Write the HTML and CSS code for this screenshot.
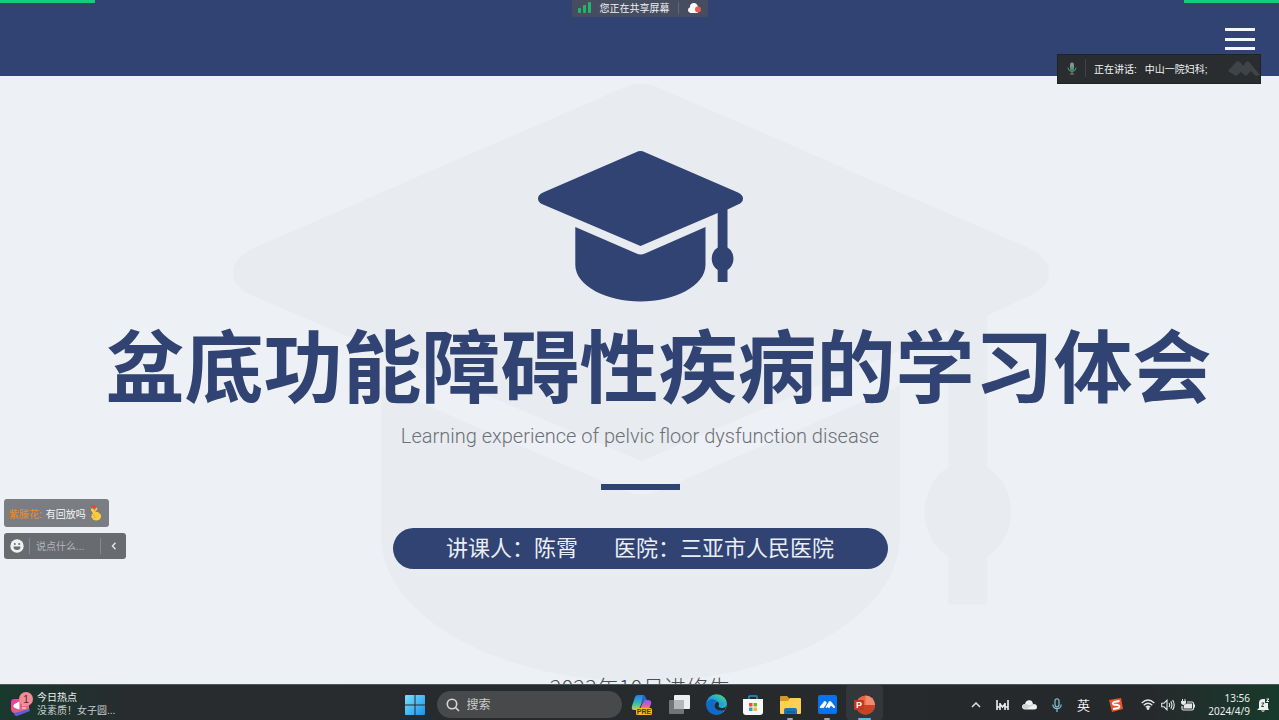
FILE: index.html
```html
<!DOCTYPE html>
<html lang="zh-CN">
<head>
<meta charset="utf-8">
<title>盆底功能障碍性疾病的学习体会</title>
<link rel="stylesheet" href="styles.css">
</head>
<body>
<svg class="defs" aria-hidden="true">
  <defs>
    <symbol id="cap" viewBox="0 0 205 151">
      <path d="M98 1.2Q102.500-1 107 1.200L200 41.500Q205 44 205 47.500Q205 51.500 200 53.500L189.500 58.500V96.500A12 13 0 0 1 189.500 119V131H179.700V119A12 13 0 0 1 179.700 96.500V62L102.500 95L5 53.500Q0 51.500 0 47.500Q0 44 5 41.500Z"/>
      <path d="M37.300 76L98.500 102.500Q102.500 104.300 107 102.500L167.500 76V114C167.500 135 136 150.500 102.500 150.500C69 150.500 37.300 135 37.300 114Z"/>
    </symbol>
    <linearGradient id="win" x1="0" y1="0" x2="1" y2="1"><stop offset="0" stop-color="#7ce0fb"/><stop offset="1" stop-color="#1793ee"/></linearGradient>
    <linearGradient id="edge" x1="0" y1="1" x2="1" y2="0"><stop offset="0" stop-color="#0f62c4"/><stop offset=".5" stop-color="#1ba4e0"/><stop offset="1" stop-color="#62e05a"/></linearGradient>
    <linearGradient id="cop1" x1="0" y1="0" x2="0" y2="1"><stop offset="0" stop-color="#2a7bea"/><stop offset=".55" stop-color="#2fbdb0"/><stop offset="1" stop-color="#c9d13c"/></linearGradient>
    <linearGradient id="cop2" x1="0" y1="0" x2="0" y2="1"><stop offset="0" stop-color="#8a5bf0"/><stop offset=".6" stop-color="#d95bc0"/><stop offset="1" stop-color="#f58a4a"/></linearGradient>
    <linearGradient id="news" x1="0" y1="0" x2="1" y2="1"><stop offset="0" stop-color="#e23ba5"/><stop offset="1" stop-color="#f2766a"/></linearGradient>
  </defs>
</svg>

<header class="topbar">
  <button class="menu" aria-label="菜单"><span></span><span></span><span></span></button>
</header>

<main class="slide">
  <svg class="watermark" aria-hidden="true"><use href="#cap"/></svg>
  <svg class="cap" aria-hidden="true"><use href="#cap"/></svg>
  <h1>盆底功能障碍性疾病的学习体会</h1>
  <p class="subtitle">Learning experience of pelvic floor dysfunction disease</p>
  <div class="rule"></div>
  <p class="speaker"><span>讲课人：陈霄</span><span>医院：三亚市人民医院</span></p>
  <p class="date">2023年10月进修生</p>
</main>

<div class="edge-mark left"></div>
<div class="edge-mark right"></div>

<div class="sharing">
  <svg width="14" height="11" viewBox="0 0 14 11" fill="#22b567"><rect x="0" y="6" width="3" height="5" rx="1"/><rect x="5" y="3" width="3" height="8" rx="1"/><rect x="10" y="0" width="3" height="11" rx="1"/></svg>
  <span class="sharing-text">您正在共享屏幕</span>
  <i class="divider"></i>
  <svg width="15" height="12" viewBox="0 0 15 12"><path d="M3.500 11A3 3 0 0 1 3 5.200A4 4 0 0 1 6.500 1A4.300 4.300 0 0 1 11 5.500V11Z" fill="#fff"/><circle cx="11" cy="7.500" r="3" fill="#e65a50"/></svg>
</div>

<div class="talking">
  <svg width="10" height="13" viewBox="0 0 10 13" fill="none"><rect x="3" y="0.500" width="4" height="8" rx="2" fill="#8b9291"/><path d="M3 5h4v1.500a2 2 0 0 1-4 0Z" fill="#28a866"/><path d="M1 5.500a4 4 0 0 0 8 0M5 9.500V12M3 12h4" stroke="#7d8483"/></svg>
  <i class="divider"></i>
  <span>正在讲话:</span><span>中山一院妇科;</span>
  <svg class="talking-logo" width="32" height="16" viewBox="0 0 32 16"><path d="M0 11L8 2Q10 0 13 3L15 6L18 2Q20 0 22 3L32 15L28 16L23 11L18 16L13 12L8 16Z" fill="#3f4449"/></svg>
</div>

<div class="chat">
  <div class="message"><span class="author">紫滕花:</span><span>有回放吗</span>
    <svg width="12" height="16" viewBox="0 0 12 16"><path d="M2 2.500Q0 .5 2 0Q3.500-.3 4 .8Q5-.3 6 .5Q7 1.500 4 4Z" fill="#e8473f"/><path d="M1 4Q2 2.500 3.500 4L6 7Q8 6.500 9 8Q11.500 9 11 12Q10 15.500 6 15.500Q3 15.500 2 13Q.5 11.500 2 10.500Q1 9 3 8.500L1.500 6Q.5 5 1 4Z" fill="#ffcb3d"/><path d="M4.500 5L6.500 2.500L7.500 3.500L6 6.500Z" fill="#ffcb3d"/><path d="M3 10.500L5 10M3.500 13L5.500 12" stroke="#dd9820" stroke-width=".7"/></svg>
  </div>
  <div class="compose">
    <button aria-label="表情"><svg width="14" height="14" viewBox="0 0 14 14"><circle cx="7" cy="7" r="6.700" fill="#f0f1f2"/><circle cx="4.800" cy="5" r="1" fill="#686b70"/><circle cx="9.200" cy="5" r="1" fill="#686b70"/><path d="M3.500 7.500h7a3.500 3.500 0 0 1-7 0Z" fill="#686b70"/></svg></button>
    <input type="text" aria-label="聊天消息" placeholder="说点什么...">
    <button aria-label="收起"><svg width="6" height="8" viewBox="0 0 6 8"><path d="M4.500 .8L1.500 4L4.500 7.200" fill="none" stroke="#e6e7e8" stroke-width="1.400"/></svg></button>
  </div>
</div>

<footer class="taskbar">
  <button class="widget">
    <svg width="23" height="26" viewBox="0 0 23 26"><path d="M3 17L18 14L20 20L7 25Q4 25 4 22Z" fill="#6759dc"/><path d="M1 11Q1 8 4 8H15Q19 8 19 11V18L4 22Q1 21 1 18Z" fill="url(#news)"/><path d="M4 14l5-3v7l-5-2ZM12 14h4M12 17h4" fill="#fff" stroke="#fff"/><circle cx="16" cy="8" r="7" fill="#f48b94"/><text x="16" y="12" class="badge-number">1</text></svg>
    <span class="widget-text"><span>今日热点</span><span class="muted">没素质！女子圆...</span></span>
  </button>

  <nav class="apps">
    <button class="app" aria-label="开始"><svg width="20" height="20" viewBox="0 0 20 20" fill="url(#win)"><path d="M0 1Q0 0 1 0H9.500V9.500H0ZM10.500 0H19Q20 0 20 1V9.500H10.500ZM0 10.500H9.500V20H1Q0 20 0 19ZM10.500 10.500H20V19Q20 20 19 20H10.500Z"/></svg></button>
    <label class="search"><svg width="14" height="14" viewBox="0 0 14 14" fill="none" stroke="#d6d7d8" stroke-width="1.600"><circle cx="6" cy="6" r="4.700"/><path d="M9.500 9.500L13 13"/></svg><input type="text" aria-label="搜索" placeholder="搜索"></label>
    <button class="app" aria-label="Copilot"><svg width="22" height="20" viewBox="0 0 22 20"><path d="M7 0H12Q14 0 13 3L9 12Q8 15 5 15H3Q0 15 1 11L4 2Q5 0 7 0Z" fill="url(#cop1)"/><path d="M12 0Q14 0 15 3L16 5L12 6L10 9Z" fill="#2467c9"/><path d="M14 5H17Q21 5 20 9L18 14H9L12 7Q13 5 14 5Z" fill="url(#cop2)"/><rect x="5" y="13" width="16" height="7" rx="1.500" fill="#f5bd23"/><text x="13" y="19" class="pre-label">PRE</text></svg></button>
    <button class="app" aria-label="任务视图"><svg width="21" height="19" viewBox="0 0 21 19"><rect x="0" y="5" width="15" height="14" rx="1" fill="#727578"/><rect x="5" y="0" width="16" height="14" rx="1" fill="#eceeef"/><path d="M5 5H15V14H6Q5 14 5 13Z" fill="#b4b7b9"/></svg></button>
    <button class="app" aria-label="Edge"><svg width="21" height="21" viewBox="0 0 21 21"><circle cx="10.500" cy="10.500" r="10.300" fill="url(#edge)"/><path d="M.3 11C1 5 8 3.500 11.500 7.500Q9 7 8 10C7 14 11 17.500 18.500 16Q14 22 8 20.500Q.5 18.500 .3 11Z" fill="#1169c8"/><path d="M11.500 7.500Q14 9.500 12.500 12Q13 14.500 17 14Q19 13.500 20 12Q19.500 15 18.500 16Q11 18 8.500 13Q7.500 9 11.500 7.500Z" fill="#202a33"/><path d="M.5 9Q3 4 8.500 5Q14 6 13.500 11Q18 13 20.700 10Q20.500 3.500 14 1Q4-1 .5 9Z" fill="url(#edge)" opacity=".85"/></svg></button>
    <button class="app" aria-label="商店"><svg width="20" height="20" viewBox="0 0 20 20"><path d="M6 5V1.500Q6 1 7 1H13Q14 1 14 1.500V5" fill="none" stroke="#2995bd" stroke-width="1.500"/><path d="M0 4H20V17Q20 20 17 20H3Q0 20 0 17Z" fill="#f6f7f8"/><path d="M6 8H9.500V11.500H6Z" fill="#e85133"/><path d="M10.500 8H14V11.500H10.500Z" fill="#78b52c"/><path d="M6 12.500H9.500V16H6Z" fill="#299fdc"/><path d="M10.500 12.500H14V16H10.500Z" fill="#f5b728"/></svg></button>
    <button class="app running" aria-label="文件资源管理器"><svg width="21" height="19" viewBox="0 0 21 19"><path d="M0 2Q0 1 1 1H7L10 4H20V10H0Z" fill="#d5972d"/><path d="M0 6H8L10 3H20Q21 3 21 4V18Q21 19 20 19H1Q0 19 0 18Z" fill="#ffcf55"/><path d="M4 19V14.500Q4 13 6 13H15Q17 13 17 14.500V19Z" fill="#1976b6"/><path d="M6 17H15" stroke="#0b5187"/></svg></button>
    <button class="app running" aria-label="腾讯会议"><svg width="19" height="19" viewBox="0 0 19 19"><rect width="19" height="19" rx="2" fill="#0873ef"/><path d="M2 11.500L6 6.500Q7 5.500 8 6.500L8.800 8L7 11L5.500 13Q4.500 13.500 4 12.500L3.500 13Q1 13.500 2 11.500ZM7.500 12L11 6.500Q12 5.500 13 6.500L17 11.500Q17.500 13.500 15.500 13L13 10.500L11.500 13Q10.500 13.500 9.800 12Q8 14 7.500 12Z" fill="#fff"/></svg></button>
    <button class="app active" aria-label="PowerPoint"><svg width="21" height="20" viewBox="0 0 21 20"><circle cx="11.500" cy="10" r="9.500" fill="#e76545"/><path d="M11.500 .5A9.500 9.500 0 0 1 21 10H11.500Z" fill="#f18b70"/><path d="M2 10H21A9.500 9.500 0 0 1 2 10Z" fill="#c94427"/><rect x="0" y="5" width="10" height="10" rx="1" fill="#bd3b20"/><text x="5" y="13" class="ppt-label">P</text></svg></button>
  </nav>

  <div class="tray">
    <button class="tray-item" aria-label="显示隐藏的图标"><svg width="10" height="6" viewBox="0 0 10 6"><path d="M1 5L5 1L9 5" fill="none" stroke="#e0e1e1" stroke-width="1.500"/></svg></button>
    <button class="tray-item" aria-label="腾讯会议托盘"><svg width="13" height="10" viewBox="0 0 13 10"><path d="M1 0V10M12 0V10M4 3V10M9 3V10M4 4L6.500 7L9 4M1 7H4M9 7H12" fill="none" stroke="#eff0f0" stroke-width="1.600"/></svg></button>
    <button class="tray-item" aria-label="OneDrive"><svg width="15" height="10" viewBox="0 0 15 10"><path d="M3 9.500Q0 9 0 6.500Q.2 4 3 4Q4 0 7.500 .3Q10.500 .5 11 4Q15 4 15 7Q15 9.500 12 9.500Z" fill="#f0f1f1"/><path d="M1 5Q4 3 7 5.500L11 4Q13 4 14 5Q9 5 5 9Q1 9 0 7Z" fill="#cfd1d2"/></svg></button>
    <button class="tray-item" aria-label="麦克风"><svg width="10" height="14" viewBox="0 0 10 14" fill="none" stroke="#82c3d5" stroke-width="1.200"><rect x="3" y=".8" width="4" height="8" rx="2"/><path d="M.8 6.500a4.200 4.200 0 0 0 8.400 0M5 10.800V14"/></svg></button>
    <button class="tray-item ime">英</button>
    <button class="tray-item sogou" aria-label="搜狗输入法"><svg width="14" height="14" viewBox="0 0 14 14"><path d="M0 2L12 0L14 11L3 14Z" fill="#ec5328"/><path d="M10.500 3L5 4Q3 5 4.500 6.500L9 7Q11.500 8.500 9.500 10L4 11" fill="none" stroke="#fff" stroke-width="1.900"/></svg></button>
    <button class="status" aria-label="网络、音量和电池">
      <svg width="14" height="11" viewBox="0 0 14 11" fill="none" stroke="#e4e6e6" stroke-width="1.300"><path d="M.7 4Q7-2 13.300 4M2.700 6.200Q7 2.300 11.300 6.200M4.700 8.300Q7 6.300 9.300 8.300"/><circle cx="7" cy="9.500" r=".8" fill="#e4e6e6"/></svg>
      <svg width="14" height="12" viewBox="0 0 14 12" fill="none" stroke="#e4e6e6" stroke-width="1.100"><path d="M.7 4.200H3L6 1.200V10.800L3 7.800H.7ZM8 4Q9.300 6 8 8M9.800 2.400Q12 6 9.800 9.600M11.600 1Q14.800 6 11.600 11"/></svg>
      <svg width="14" height="12" viewBox="0 0 14 12"><path d="M6 3H11Q12.500 3 12.500 4.500V9.500Q12.500 11 11 11H2.500Q1 11 1 9.500V7" fill="none" stroke="#e4e6e6" stroke-width="1.200"/><path d="M3 6L6 4.500H11V9.500H2.500ZM13 5.500H14V8.500H13Z" fill="#e4e6e6"/><path d="M0 2H5V4Q4.500 6 2.500 6Q.5 6 0 4ZM1 0H2V2H1ZM3.500 0H4.500V2H3.500Z" fill="#e4e6e6"/></svg>
    </button>
    <button class="clock"><span>13:56</span><span>2024/4/9</span></button>
    <button class="bell" aria-label="通知"><svg width="13" height="14" viewBox="0 0 13 14"><path d="M2 10V5Q2 1 6 1H8V5H11V10L12 12H0Z" fill="#eff1f1"/><path d="M4 12.500H8Q6 15 4 12.500Z" fill="#eff1f1"/><path d="M9.500 1H12L9.500 3.500H12" fill="none" stroke="#eff1f1"/><path d="M4.500 5H7L4.500 8.500H7" fill="none" stroke="#26362f" stroke-width=".9"/></svg></button>
  </div>
</footer>
</body>
</html>
```

FILE: styles.css
```css
* { box-sizing: border-box; }

body {
  margin: 0;
  position: relative;
  display: flex;
  flex-direction: column;
  height: 100vh;
  overflow: hidden;
  background: #edf1f6;
  font-family: "Liberation Sans", "Noto Sans CJK SC", sans-serif;
  font-size: 10px;
}

button, input {
  margin: 0;
  padding: 0;
  border: 0;
  background: none;
  color: inherit;
  font: inherit;
}

p, h1 { margin: 0; }
svg { display: block; flex: none; }
.defs { position: absolute; width: 0; height: 0; }

.topbar {
  flex: none;
  display: flex;
  justify-content: flex-end;
  height: 76px;
  padding: 28px 24px 0 0;
  background: #304372;
}

.menu {
  display: flex;
  flex-direction: column;
  justify-content: space-between;
  width: 30px;
  height: 22px;
}

.menu span { width: 100%; height: 3px; background: #f4f6fb; }

.slide {
  position: relative;
  flex: 1;
  min-height: 0;
  display: flex;
  flex-direction: column;
  align-items: center;
  padding: 75px 0 0 1px;
  overflow: hidden;
  white-space: nowrap;
}

.slide > * { position: relative; flex: none; }

.slide .watermark {
  position: absolute;
  top: 7px;
  left: 50%;
  width: 816px;
  height: 601px;
  margin-left: -407px;
  fill: #e8ecf0;
}

.cap { width: 205px; height: 151px; fill: #304372; }

h1 {
  margin-top: 21px;
  padding-left: 37px;
  color: #304372;
  font-family: "Noto Sans CJK SC", sans-serif;
  font-size: 79px;
  font-weight: 700;
  line-height: 80px;
}

.subtitle {
  margin-top: 21px;
  color: #6d7076;
  font-family: Roboto, "Liberation Sans", sans-serif;
  font-size: 20px;
  font-weight: 300;
  line-height: 24px;
}

.rule { width: 79px; height: 6px; margin-top: 36px; background: #304372; }

.speaker {
  display: flex;
  justify-content: center;
  gap: 36px;
  width: 495px;
  margin-top: 38px;
  padding-bottom: 4px;
  border-radius: 21px;
  background: #304372;
  color: #e9edf6;
  font-family: "Noto Sans CJK SC", sans-serif;
  font-size: 22px;
  font-weight: 400;
  line-height: 37px;
}

.date {
  margin-top: 101px;
  color: #4b4e54;
  font-family: "Noto Sans CJK SC", sans-serif;
  font-size: 22px;
  font-weight: 300;
  line-height: 32px;
}

.edge-mark { position: absolute; top: 0; width: 95px; height: 3px; background: #0fcf7d; }
.edge-mark.left { left: 0; }
.edge-mark.right { right: 0; }

.divider { width: 1px; height: 12px; background: #62666d; }

.sharing {
  position: absolute;
  top: 0;
  left: 50%;
  display: flex;
  align-items: center;
  justify-content: space-between;
  width: 136px;
  height: 17px;
  margin-left: -68px;
  padding: 0 6px 2px;
  border-radius: 0 0 3px 3px;
  background: #474d60;
  color: #eef0f3;
}

.talking {
  position: absolute;
  top: 54px;
  right: 18px;
  display: flex;
  align-items: center;
  gap: 8px;
  width: 204px;
  height: 30px;
  padding: 0 0 2px 9px;
  border: 1px solid #1e2326;
  background: #292d30;
  color: #f2f3f3;
  white-space: nowrap;
}

.talking .divider { height: 18px; background: #3f4447; }
.talking-logo { margin-left: auto; }

.chat {
  position: absolute;
  bottom: 161px;
  left: 4px;
  display: flex;
  flex-direction: column;
  align-items: flex-start;
  gap: 6px;
}

.message, .compose {
  display: flex;
  align-items: center;
  border-radius: 3px;
  color: #f4f5f6;
}

.message { gap: 4px; height: 28px; padding: 0 7px 0 5px; background: #7a7d82; }
.author { color: #f08a2c; }

.compose { width: 122px; height: 26px; background: #686b70; }
.compose button { display: grid; place-items: center; width: 25px; height: 100%; }

.compose input {
  flex: 1;
  min-width: 0;
  height: 16px;
  padding-left: 6px;
  border: solid #85888c;
  border-width: 0 1px;
}

.compose input::placeholder { color: #b3b5b8; opacity: 1; }

.taskbar {
  flex: none;
  display: grid;
  grid-template-columns: 1fr auto 1fr;
  height: 36px;
  border-top: 1px solid #4c5758;
  background: linear-gradient(90deg, #19382d 0, #282c2f 10%, #26292c 90%, #173a2b 100%);
  color: #eceeee;
}

.widget { display: flex; align-items: center; gap: 4px; padding: 2px 0 0 10px; text-align: left; }
.widget-text { display: flex; flex-direction: column; line-height: 13px; white-space: nowrap; }
.muted { color: #c7cacb; }
.badge-number { fill: #432d32; font-size: 10px; text-anchor: middle; }

.apps { display: flex; align-items: center; }
.app { position: relative; display: grid; place-items: center; width: 37px; height: 100%; padding-top: 4px; }

.app.running::after, .app.active::after {
  content: "";
  position: absolute;
  bottom: 0;
  width: 6px;
  height: 2px;
  border-radius: 2px;
  background: #a5a8aa;
}

.app.active { border-radius: 4px; background: #33373a; }
.app.active::after { width: 13px; background: #4fbdee; }

.search {
  display: flex;
  align-items: center;
  gap: 7px;
  width: 185px;
  height: 27px;
  margin: 4px 2px 0 3px;
  padding: 0 9px;
  border-radius: 14px;
  background: #48494b;
  font-size: 12px;
}

.search input { min-width: 0; width: 100%; }
.search input::placeholder { color: #cccdce; opacity: 1; }
.pre-label { fill: #48390f; font-size: 7px; font-weight: bold; text-anchor: middle; }
.ppt-label { fill: #fff; font-size: 9px; font-weight: bold; text-anchor: middle; }

.tray { display: flex; justify-content: flex-end; align-items: center; padding: 4px 7px 0 0; }
.tray-item { display: grid; place-items: center; width: 27px; height: 100%; }
.ime { font-size: 13px; }
.sogou { width: 37px; }
.status { display: flex; align-items: center; gap: 6px; padding: 0 3px 0 7px; height: 100%; }

.clock {
  display: flex;
  flex-direction: column;
  align-items: flex-end;
  min-width: 52px;
  font-family: "Noto Sans", sans-serif;
  line-height: 13px;
}

.bell { display: grid; place-items: center; width: 22px; height: 100%; padding-left: 4px; }
```
